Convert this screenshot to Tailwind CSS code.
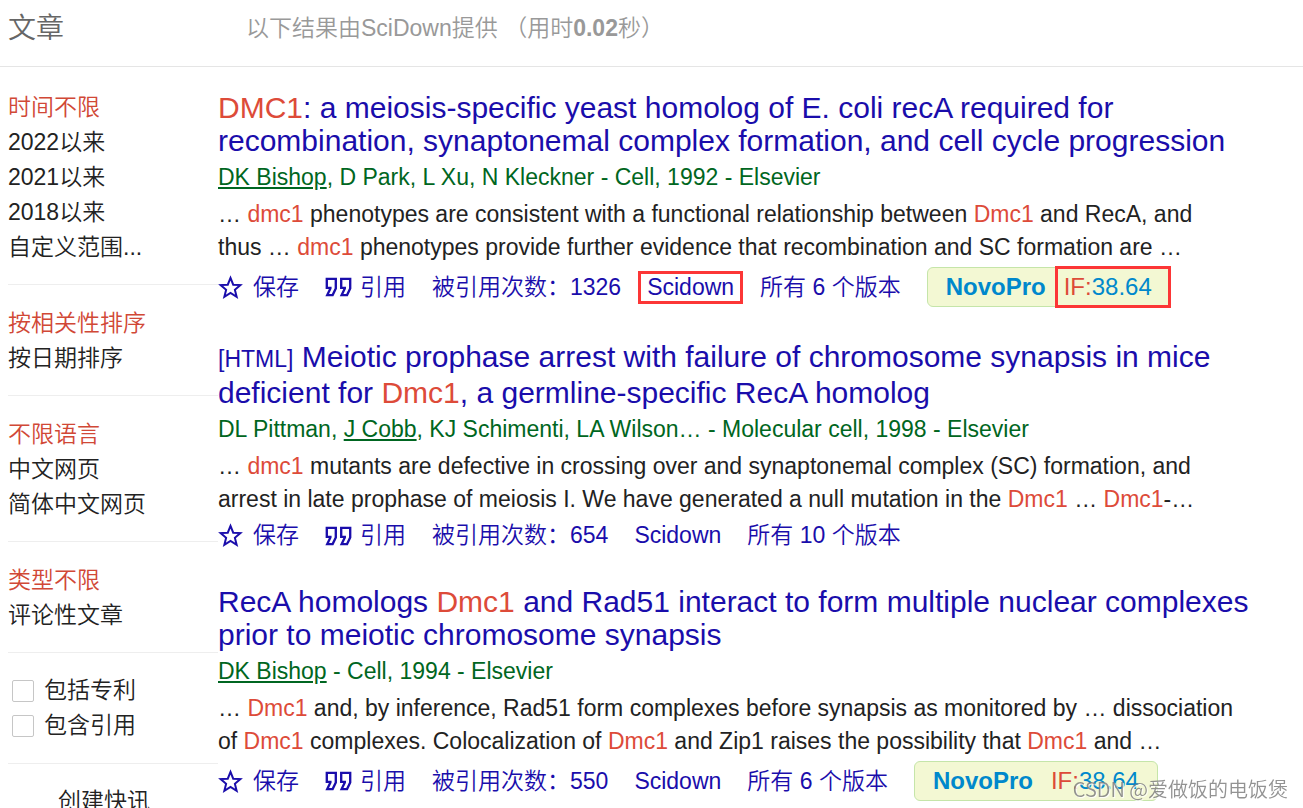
<!DOCTYPE html>
<html lang="zh-CN">
<head>
  <meta charset="UTF-8">
  <meta name="viewport" content="width=device-width, initial-scale=1.0">
  <title>文章 - SciDown</title>
  <script src="https://cdn.jsdelivr.net/npm/@tailwindcss/browser@4"></script>
</head>
<body class="bg-white font-['Liberation_Sans','Noto_Sans_CJK_SC',sans-serif] font-[350] text-[23px] leading-[33px] text-[#222]">
  <svg class="hidden">
    <symbol id="star" viewBox="0 0 24 24">
      <path d="M12 2.8L14.600 9.300L21.500 9.700L16.200 14.200L17.900 20.900L12 17.200L6.100 20.900L7.800 14.200L2.500 9.700L9.400 9.300Z" fill="none" stroke="currentColor" stroke-width="1.9"/>
    </symbol>
    <symbol id="quote" viewBox="0.5 2.5 15 11">
      <path d="M1.500 3.500v5h2v.375L1.750 12.500h3L6.500 8.875V3.500zM9.500 3.500v5h2v.375L9.750 12.500h3L14.500 8.875V3.500z" fill="none" stroke="currentColor" stroke-width="1.300"/>
    </symbol>
  </svg>

  <header class="flex items-center h-[67px] pb-2.5 px-2 border-b border-[#e5e5e5]">
    <h1 class="w-[238px] shrink-0 text-[28px] text-[#666]">文章</h1>
    <p class="text-[#999]">以下结果由SciDown提供 （用时<b class="font-bold">0.02</b>秒）</p>
  </header>

  <div class="flex">
    <aside class="w-[218px] shrink-0 pl-2 pt-0.5 leading-[35px]">
      <ul class="pt-[21px] pb-[19px] border-b border-[#eee]">
        <li><a href="#" class="text-[#d14836]">时间不限</a></li>
        <li><a href="#">2022以来</a></li>
        <li><a href="#">2021以来</a></li>
        <li><a href="#">2018以来</a></li>
        <li><a href="#">自定义范围...</a></li>
      </ul>
      <ul class="pt-[21px] pb-[19px] border-b border-[#eee]">
        <li><a href="#" class="text-[#d14836]">按相关性排序</a></li>
        <li><a href="#">按日期排序</a></li>
      </ul>
      <ul class="pt-[21px] pb-[19px] border-b border-[#eee]">
        <li><a href="#" class="text-[#d14836]">不限语言</a></li>
        <li><a href="#">中文网页</a></li>
        <li><a href="#">简体中文网页</a></li>
      </ul>
      <ul class="pt-[21px] pb-[19px] border-b border-[#eee]">
        <li><a href="#" class="text-[#d14836]">类型不限</a></li>
        <li><a href="#">评论性文章</a></li>
      </ul>
      <div class="py-5 border-b border-[#eee]">
        <label class="flex items-center gap-2.5 pl-1"><input type="checkbox" class="appearance-none size-[22px] border border-[#c6c6c6] rounded-xs">包括专利</label>
        <label class="flex items-center gap-2.5 pl-1"><input type="checkbox" class="appearance-none size-[22px] border border-[#c6c6c6] rounded-xs">包含引用</label>
      </div>
      <a href="#" class="block pt-5 pl-[50px]">创建快讯</a>
    </aside>

    <main class="flex flex-col gap-[33px] pt-6 whitespace-nowrap">
      <article>
        <h3 class="text-[30px]"><a href="#" class="text-[#1a0dab]"><span class="text-[#dd4b39]">DMC1</span>: a meiosis-specific yeast homolog of E. coli recA required for<br>recombination, synaptonemal complex formation, and cell cycle progression</a></h3>
        <p class="mt-1 text-[#006621]"><a href="#" class="underline">DK Bishop</a>, D Park, L Xu, N Kleckner - Cell, 1992 - Elsevier</p>
        <p class="mt-1">… <span class="text-[#dd4b39]">dmc1</span> phenotypes are consistent with a functional relationship between <span class="text-[#dd4b39]">Dmc1</span> and RecA, and<br>thus … <span class="text-[#dd4b39]">dmc1</span> phenotypes provide further evidence that recombination and SC formation are …</p>
        <div class="flex items-center gap-[26px] mt-[3px] text-[#1a0dab]">
          <a href="#" class="flex items-center gap-[10px]"><svg class="size-[25px] overflow-visible"><use href="#star"/></svg>保存</a>
          <a href="#" class="flex items-center gap-2"><svg class="w-[27px] h-5"><use href="#quote"/></svg>引用</a>
          <a href="#">被引用次数：1326</a>
          <a href="#" class="relative">Scidown<span class="absolute -inset-x-[9px] inset-y-0 border-3 border-[#fc3636]"></span></a>
          <a href="#">所有 6 个版本</a>
          <a href="#" class="flex items-center gap-[18px] h-10 px-[18px] border border-[#c5e5a9] rounded-md bg-[#f3f8d3] text-2xl text-[#0088cc]"><b class="font-bold">NovoPro</b><span class="relative"><span class="text-[#dd4b39]">IF:</span>38.64<span class="absolute -left-[9px] -right-[19px] -inset-y-[5px] border-3 border-[#fc3636]"></span></span></a>
        </div>
      </article>

      <article>
        <h3 class="text-[30px]"><span class="text-[23px] text-[#1a0dab]">[HTML]</span> <a href="#" class="text-[#1a0dab]">Meiotic prophase arrest with failure of chromosome synapsis in mice<br>deficient for <span class="text-[#dd4b39]">Dmc1</span>, a germline-specific RecA homolog</a></h3>
        <p class="mt-1 text-[#006621]">DL Pittman, <a href="#" class="underline">J Cobb</a>, KJ Schimenti, LA Wilson… - Molecular cell, 1998 - Elsevier</p>
        <p class="mt-1">… <span class="text-[#dd4b39]">dmc1</span> mutants are defective in crossing over and synaptonemal complex (SC) formation, and<br>arrest in late prophase of meiosis I. We have generated a null mutation in the <span class="text-[#dd4b39]">Dmc1</span> … <span class="text-[#dd4b39]">Dmc1</span>-…</p>
        <div class="flex items-center gap-[26px] mt-[3px] text-[#1a0dab]">
          <a href="#" class="flex items-center gap-[10px]"><svg class="size-[25px] overflow-visible"><use href="#star"/></svg>保存</a>
          <a href="#" class="flex items-center gap-2"><svg class="w-[27px] h-5"><use href="#quote"/></svg>引用</a>
          <a href="#">被引用次数：654</a>
          <a href="#">Scidown</a>
          <a href="#">所有 10 个版本</a>
        </div>
      </article>

      <article>
        <h3 class="text-[30px]"><a href="#" class="text-[#1a0dab]">RecA homologs <span class="text-[#dd4b39]">Dmc1</span> and Rad51 interact to form multiple nuclear complexes<br>prior to meiotic chromosome synapsis</a></h3>
        <p class="mt-1 text-[#006621]"><a href="#" class="underline">DK Bishop</a> - Cell, 1994 - Elsevier</p>
        <p class="mt-1">… <span class="text-[#dd4b39]">Dmc1</span> and, by inference, Rad51 form complexes before synapsis as monitored by … dissociation<br>of <span class="text-[#dd4b39]">Dmc1</span> complexes. Colocalization of <span class="text-[#dd4b39]">Dmc1</span> and Zip1 raises the possibility that <span class="text-[#dd4b39]">Dmc1</span> and …</p>
        <div class="flex items-center gap-[26px] mt-[3px] text-[#1a0dab]">
          <a href="#" class="flex items-center gap-[10px]"><svg class="size-[25px] overflow-visible"><use href="#star"/></svg>保存</a>
          <a href="#" class="flex items-center gap-2"><svg class="w-[27px] h-5"><use href="#quote"/></svg>引用</a>
          <a href="#">被引用次数：550</a>
          <a href="#">Scidown</a>
          <a href="#">所有 6 个版本</a>
          <a href="#" class="flex items-center gap-[18px] h-10 px-[18px] border border-[#c5e5a9] rounded-md bg-[#f3f8d3] text-2xl text-[#0088cc]"><b class="font-bold">NovoPro</b><span><span class="text-[#dd4b39]">IF:</span>38.64</span></a>
        </div>
      </article>
    </main>
  </div>

  <!-- watermark -->
  <div class="fixed right-[15px] bottom-1 font-['Noto_Sans_CJK_SC',sans-serif] text-xl leading-[30px] text-[#777]/80 text-shadow-[1px_1px_1px_#fff] pointer-events-none">CSDN @爱做饭的电饭煲</div>
</body>
</html>
